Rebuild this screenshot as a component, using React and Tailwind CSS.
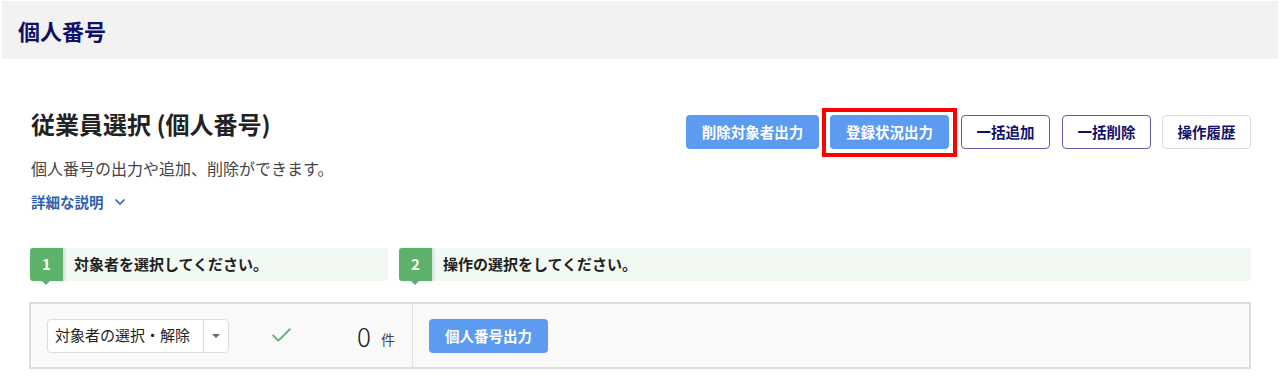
import React from 'react';
import { ChevronDown, Check } from 'lucide-react';

const FONT = { fontFamily: '"Noto Sans CJK JP", "Noto Sans", sans-serif' };

function StepLabel({ num, text, className }) {
  return (
    <div className={`flex h-[33px] items-stretch rounded-[3px] bg-[#f2f9f3] ${className}`}>
      <div className="relative flex w-[33px] items-center justify-center rounded-l-[3px] bg-[#5cb26a] text-[15px] font-bold text-white shadow-[2px_0_3px_rgba(0,0,0,0.12)]">
        {num}
        <span className="absolute -bottom-[4px] left-[12px] h-0 w-0 border-x-[4px] border-t-[4px] border-x-transparent border-t-[#5cb26a]" />
      </div>
      <div className="flex items-center pl-[11px] text-[15px] font-bold text-[#222]">{text}</div>
    </div>
  );
}

export default function App() {
  return (
    <div className="min-h-[379px] bg-white" style={FONT}>
      {/* page header */}
      <div className="mx-[2px] mt-px flex h-[58px] items-center bg-[#f2f2f2] pl-4">
        <h1 className="text-[22px] font-bold leading-[30px] text-[#10106b]">個人番号</h1>
      </div>

      <div className="pl-[31px] pr-[29px]">
        {/* title row */}
        <div className="mt-[49px] flex items-start justify-between">
          <div>
            <h2 className="text-[24px] font-bold leading-[32px] text-[#222]">従業員選択 (個人番号)</h2>
            <p className="mt-[16px] text-[16px] leading-6 text-[#444]">個人番号の出力や追加、削除ができます。</p>
            <button className="mt-[12px] flex h-[20px] items-center gap-[8px] text-[14.5px] font-bold text-[#2f5fae]">
              詳細な説明
              <ChevronDown size={16} strokeWidth={2.5} />
            </button>
          </div>
          <div className="mt-[7px] flex items-center">
            <button className="h-[34px] w-[133px] rounded-[4px] bg-[#5c9bef] text-[14.5px] font-bold text-white">削除対象者出力</button>
            <div className="relative ml-[11px]">
              <button className="block h-[34px] w-[119px] rounded-[4px] bg-[#5c9bef] text-[14.5px] font-bold text-white">登録状況出力</button>
              <span className="pointer-events-none absolute -bottom-[8px] -left-[8px] -right-[8px] -top-[7px] border-4 border-[#ff0000]" />
            </div>
            <button className="ml-[12px] h-[34px] w-[89px] rounded-[4px] border border-[#5b5bab] bg-white text-[14.5px] font-bold text-[#10106b]">一括追加</button>
            <button className="ml-[12px] h-[34px] w-[89px] rounded-[4px] border border-[#5b5bab] bg-white text-[14.5px] font-bold text-[#10106b]">一括削除</button>
            <button className="ml-[11px] h-[34px] w-[89px] rounded-[4px] border border-[#dddddd] bg-white text-[14.5px] font-bold text-[#10106b]">操作履歴</button>
          </div>
        </div>

        {/* steps */}
        <div className="-ml-px mt-[36px] flex">
          <StepLabel num="1" text="対象者を選択してください。" className="w-[358px]" />
          <StepLabel num="2" text="操作の選択をしてください。" className="ml-[11px] flex-1" />
        </div>

        {/* selection table */}
        <div className="-ml-[2px] mt-[21px] flex h-[67px] border-2 border-[#dcdcdc] bg-[#f9f9f9]">
          <div className="flex w-[382px] items-center border-r border-[#e2e2e2] pl-[16px]">
            <div className="flex h-[34px] w-[182px] items-stretch rounded-[4px] border border-[#dddddd] bg-white">
              <div className="flex flex-1 items-center pl-[7px] text-[15px] text-[#222]">対象者の選択・解除</div>
              <div className="flex w-[25px] items-center justify-center border-l border-[#dddddd]">
                <span className="h-0 w-0 border-x-[4px] border-t-[4px] border-x-transparent border-t-[#666]" />
              </div>
            </div>
            <Check size={25} strokeWidth={1.7} className="ml-[40px] text-[#5cb26a]" />
            <span className="ml-[63px] text-[26px] font-light leading-none text-[#222]">0</span>
            <span className="ml-[10px] mt-[8px] text-[14px] text-[#444]">件</span>
          </div>
          <div className="flex items-center pl-[16px]">
            <button className="h-[34px] w-[119px] rounded-[4px] bg-[#5c9bef] text-[14.5px] font-bold text-white">個人番号出力</button>
          </div>
        </div>
      </div>
    </div>
  );
}
